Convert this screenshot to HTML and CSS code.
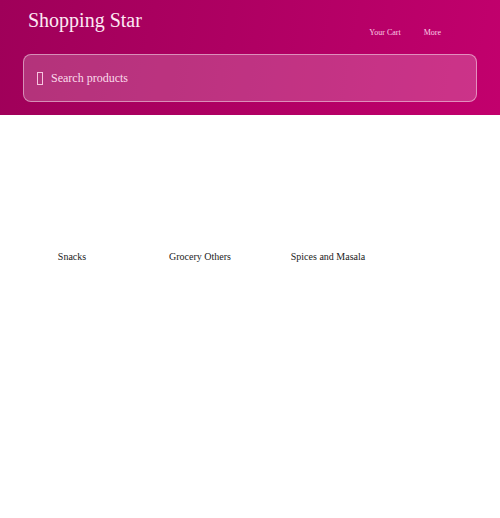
FILE: index.html
```html
<!DOCTYPE html>
<html>
  <head>
    <link rel="stylesheet" href="styles.css">
  </head>
  <body>
    <header class="site-header">
      <div class="top-bar">
        <h1 class="brand">Shopping Star</h1>
        <nav class="nav-links">
          <a href="#">Your Cart</a>
          <a href="#">More</a>
        </nav>
      </div>
      <div class="search-box">
        <span class="search-icon"></span>
        <span class="search-text">Search products</span>
      </div>
    </header>

    <div class="categories">
      <div class="category">
        <div class="category-image"></div>
        <div class="category-name">Snacks</div>
      </div>
      <div class="category">
        <div class="category-image"></div>
        <div class="category-name">Grocery Others</div>
      </div>
      <div class="category">
        <div class="category-image"></div>
        <div class="category-name">Spices and Masala</div>
      </div>
    </div>
  </body>
</html>
```

FILE: styles.css
```css
body {
  margin: 0;
  padding: 0;
  font-family: "Liberation Serif", "Times New Roman", serif;
  background-color: #fff;
}

.site-header {
  background: linear-gradient(100deg, #9f0059 0%, #ae0062 45%, #c2006d 100%);
  padding: 8px 23px 13px;
  box-sizing: border-box;
  height: 115px;
}

.top-bar {
  display: flex;
  justify-content: space-between;
  height: 46px;
}

.brand {
  margin: 0 0 0 5px;
  font-size: 20px;
  font-weight: normal;
  line-height: 24px;
  color: #fde8f3;
}

.nav-links {
  display: flex;
  gap: 23px;
  padding-top: 20px;
  margin-right: 36px;
}

.nav-links a {
  font-size: 8px;
  line-height: 10px;
  color: #fbcde5;
  text-decoration: none;
}

.search-box {
  display: flex;
  align-items: center;
  height: 48px;
  box-sizing: border-box;
  border: 1px solid rgba(255, 255, 255, 0.45);
  border-radius: 8px;
  background-color: rgba(255, 255, 255, 0.2);
  padding-left: 13px;
}

.search-icon {
  width: 4px;
  height: 11px;
  border: 1px solid #f7c4df;
  margin-right: 8px;
}

.search-text {
  font-size: 12px;
  color: #fbdcec;
}

.categories {
  display: flex;
  padding: 20px 8px 0;
}

.category {
  width: 128px;
  display: flex;
  flex-direction: column;
  align-items: center;
}

.category-image {
  width: 100px;
  height: 112px;
}

.category-name {
  font-size: 10px;
  line-height: 20px;
  color: #222;
}
```
